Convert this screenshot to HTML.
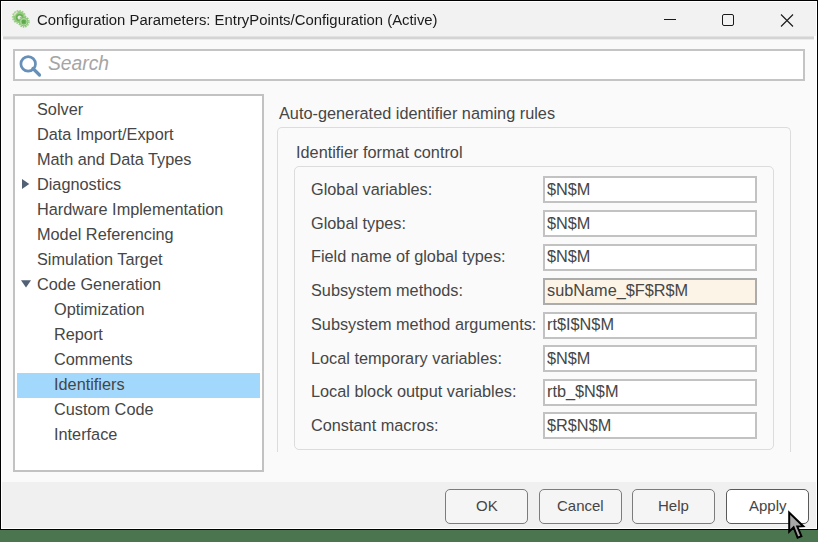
<!DOCTYPE html>
<html><head><meta charset="utf-8">
<style>
*{margin:0;padding:0;box-sizing:border-box}
html,body{width:818px;height:542px;overflow:hidden;background:#4a754f;font-family:"Liberation Sans",sans-serif}
.a{position:absolute}
#win{position:absolute;left:0;top:0;width:818px;height:530px;background:#000}
#inner{position:absolute;left:1px;top:1px;width:816px;height:528px;background:#fff}
#title{position:absolute;left:2px;top:2px;width:814px;height:34px;background:#f2f2f2}
#sep{position:absolute;left:3px;top:36px;width:811px;height:4px;background:linear-gradient(#e2e2e2 0 1px,#d4d4d4 1px 3px,#ececec 3px 4px)}
#content{position:absolute;left:2px;top:40px;width:814px;height:442px;background:#fafafa}
#bar{position:absolute;left:2px;top:482px;width:814px;height:46px;background:#f0f0f0}
.t{position:absolute;white-space:nowrap;font-size:16.3px;line-height:16px;color:#464646}
.tt{position:absolute;white-space:nowrap;font-size:14.86px;line-height:15px;color:#1b1b1b}
#search{position:absolute;left:13px;top:49px;width:792px;height:32px;background:#fff;border:2px solid #c4c4c4}
#tree{position:absolute;left:13px;top:94px;width:251px;height:378px;background:#fff;border:2px solid #c2c2c2}
.sel{position:absolute;left:17px;top:373px;width:243px;height:25px;background:#a2d8fc}
.gb{position:absolute;border:1px solid #dcdcdc;border-radius:5px}
.fld{position:absolute;left:543px;width:214px;height:27px;background:#fff;border:2px solid #c2c2c2}
.btn{position:absolute;top:489px;width:83px;height:35px;border:1px solid #7c7c7c;border-radius:5px;background:#f5f5f5}
.bt{position:absolute;white-space:nowrap;font-size:15px;line-height:15px;color:#454545}
</style></head><body>
<div id="win"><div id="inner"></div></div>
<div id="title"></div>
<div id="sep"></div>
<div id="content"></div>
<div id="bar"></div>

<!-- title icon -->
<svg class="a" style="left:11px;top:9px" width="21" height="21" viewBox="0 0 21 21">
  <circle cx="8" cy="8" r="6.4" fill="none" stroke="#9fd28c" stroke-width="1.4" stroke-dasharray="1.7 1.0"/>
  <circle cx="8" cy="8" r="5.9" fill="#90cb7b"/>
  <path d="M3.3 6.5 A5 5 0 0 1 6.5 3.2" stroke="#e4e6cc" stroke-width="1.4" fill="none"/>
  <circle cx="8.6" cy="8.6" r="2.9" fill="#e2eedb" stroke="#66ae52" stroke-width="1.6"/>
  <circle cx="12.8" cy="12.8" r="5.2" fill="none" stroke="#8cc877" stroke-width="1.3" stroke-dasharray="1.5 1.0"/>
  <circle cx="12.8" cy="12.8" r="4.6" fill="#80c26b"/>
  <circle cx="12.8" cy="12.8" r="3.3" fill="none" stroke="#b9dcab" stroke-width="0.9"/>
  <rect x="11.0" y="11.0" width="3.6" height="3.6" fill="#5ea94b"/>
</svg>
<div class="tt" style="left:36.7px;top:13px;will-change:transform">Configuration Parameters: EntryPoints/Configuration (Active)</div>

<!-- window controls -->
<div class="a" style="left:664px;top:19px;width:12px;height:1px;background:#1a1a1a"></div>
<div class="a" style="left:722px;top:14px;width:12px;height:12px;border:1px solid #1a1a1a;border-radius:2px"></div>
<svg class="a" style="left:780px;top:14px" width="14" height="13" viewBox="0 0 14 13"><path d="M1 0.5 L13 12.5 M13 0.5 L1 12.5" stroke="#1a1a1a" stroke-width="1.1"/></svg>

<!-- search -->
<div id="search"></div>
<svg class="a" style="left:18px;top:54px" width="26" height="26" viewBox="0 0 26 26">
  <circle cx="10.2" cy="9.9" r="7.3" fill="none" stroke="#6790b8" stroke-width="2.7"/>
  <path d="M15 14.5 L21.5 21" stroke="#6790b8" stroke-width="3.2" stroke-linecap="round"/>
</svg>
<div class="a" style="left:48px;top:54px;font-size:19.3px;line-height:19px;font-style:italic;color:#a5a5a5;white-space:nowrap">Search</div>

<!-- tree -->
<div id="tree"></div>
<div class="sel"></div>
<svg class="a" style="left:21px;top:178px" width="12" height="12" viewBox="0 0 12 12"><path d="M1 1 L1 11 L8.3 6 Z" fill="#526174"/></svg>
<svg class="a" style="left:20px;top:279px" width="12" height="10" viewBox="0 0 12 10"><path d="M1 1.2 L11 1.2 L6 8.6 Z" fill="#526174"/></svg>
<div class="t" style="left:37px;top:101px">Solver</div>
<div class="t" style="left:37px;top:126px">Data Import/Export</div>
<div class="t" style="left:37px;top:151px">Math and Data Types</div>
<div class="t" style="left:37px;top:176px">Diagnostics</div>
<div class="t" style="left:37px;top:201px">Hardware Implementation</div>
<div class="t" style="left:37px;top:226px">Model Referencing</div>
<div class="t" style="left:37px;top:251px">Simulation Target</div>
<div class="t" style="left:37px;top:276px">Code Generation</div>
<div class="t" style="left:54px;top:301px">Optimization</div>
<div class="t" style="left:54px;top:326px">Report</div>
<div class="t" style="left:54px;top:351px">Comments</div>
<div class="t" style="left:54px;top:376px">Identifiers</div>
<div class="t" style="left:54px;top:401px">Custom Code</div>
<div class="t" style="left:54px;top:426px">Interface</div>

<!-- right panel -->
<div class="t" style="left:279px;top:105px">Auto-generated identifier naming rules</div>
<div class="gb" style="left:277px;top:127px;width:514px;height:340px;border-bottom:none;border-radius:5px 5px 0 0"></div>
<div class="a" style="left:277px;top:452px;width:514px;height:20px;background:#fafafa"></div>
<div class="t" style="left:296px;top:144px">Identifier format control</div>
<div class="gb" style="left:294px;top:166px;width:480px;height:284px"></div>

<div class="t" style="left:311px;top:181px">Global variables:</div>
<div class="t" style="left:311px;top:215px">Global types:</div>
<div class="t" style="left:311px;top:248px">Field name of global types:</div>
<div class="t" style="left:311px;top:282px">Subsystem methods:</div>
<div class="t" style="left:311px;top:316px">Subsystem method arguments:</div>
<div class="t" style="left:311px;top:350px">Local temporary variables:</div>
<div class="t" style="left:311px;top:383px">Local block output variables:</div>
<div class="t" style="left:311px;top:417px">Constant macros:</div>

<div class="fld" style="top:176px"></div>
<div class="fld" style="top:210px"></div>
<div class="fld" style="top:244px"></div>
<div class="fld" style="top:278px;background:#fdf4e8;border-color:#acacac"></div>
<div class="fld" style="top:312px"></div>
<div class="fld" style="top:345px"></div>
<div class="fld" style="top:379px"></div>
<div class="fld" style="top:412px"></div>
<div class="t" style="left:547px;top:181px">$N$M</div>
<div class="t" style="left:547px;top:215px">$N$M</div>
<div class="t" style="left:547px;top:248px">$N$M</div>
<div class="t" style="left:547px;top:282px">subName_$F$R$M</div>
<div class="t" style="left:547px;top:316px">rt$I$N$M</div>
<div class="t" style="left:547px;top:350px">$N$M</div>
<div class="t" style="left:547px;top:383px">rtb_$N$M</div>
<div class="t" style="left:547px;top:417px">$R$N$M</div>

<!-- buttons -->
<div class="btn" style="left:445px"></div>
<div class="btn" style="left:539px"></div>
<div class="btn" style="left:632px"></div>
<div class="btn" style="left:726px;background:#fff;border-color:#5a5a5a"></div>
<div class="bt" style="left:476px;top:498px">OK</div>
<div class="bt" style="left:557px;top:498px">Cancel</div>
<div class="bt" style="left:658px;top:498px">Help</div>
<div class="bt" style="left:749px;top:498px">Apply</div>

<!-- cursor -->
<svg class="a" style="left:786px;top:509px" width="22" height="33" viewBox="0 0 22 33">
  <path d="M3.2 3.6 L3.2 22.6 L7.6 18.2 L11.6 28.6 L15.4 27.2 L11.3 17.4 L17.2 17.2 Z" fill="#a8a8a8" stroke="#000" stroke-width="2" stroke-linejoin="miter"/>
</svg>
</body></html>
